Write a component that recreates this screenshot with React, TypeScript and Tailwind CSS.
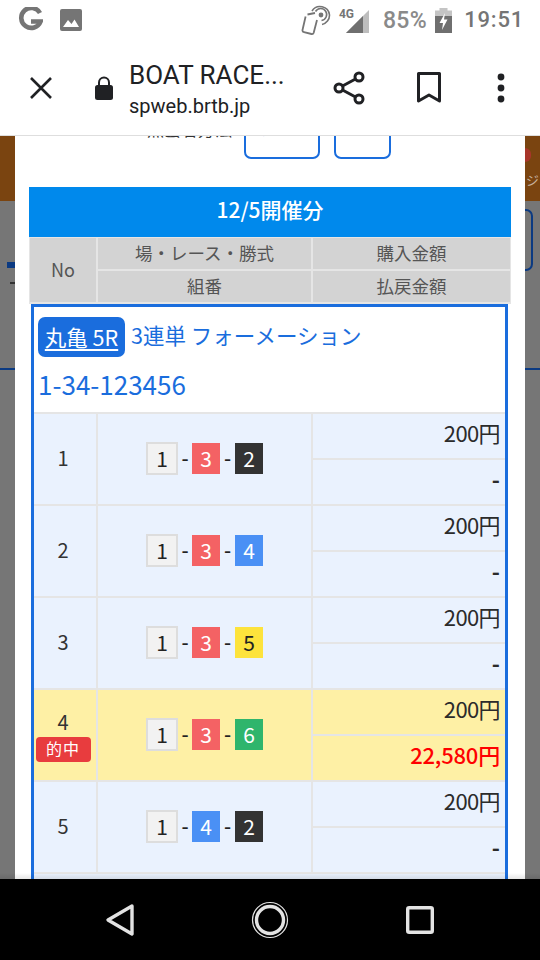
import React from "react";

const jp = "font-['Noto_Sans_CJK_JP','Noto_Sans',sans-serif]";

const boatColors: Record<number, string> = {
  1: "bg-[#f2f2f2] text-[#222] border-2 border-[#dddddd] w-[32px] h-[33px]",
  2: "bg-[#333333] text-white w-[28px] h-[31px]",
  3: "bg-[#f46264] text-white w-[28px] h-[31px]",
  4: "bg-[#4a90f5] text-white w-[28px] h-[31px]",
  5: "bg-[#fde33c] text-[#222] w-[28px] h-[31px]",
  6: "bg-[#2fb56c] text-white w-[28px] h-[31px]",
};

function Boat({ n }: { n: number }) {
  return (
    <span className={`flex items-center justify-center text-[21px] leading-none pb-[1px] ${boatColors[n]}`}>{n}</span>
  );
}

function Row({ no, combo, hit, payout }: { no: number; combo: number[]; hit?: boolean; payout?: string }) {
  const bg = hit ? "bg-[#fef0a5]" : "bg-[#eaf2fe]";
  return (
    <div className="grid grid-cols-[62px_213px_192px] gap-x-[2px] h-[92px] pb-[2px] bg-[#e5e5e5]">
      <div className={`${bg} flex flex-col items-center justify-center text-[20px] text-[#333] pr-[4px] ${hit ? "pt-[1px]" : "pb-[3px]"}`}>
        <span className="leading-[24px]">{no}</span>
        {hit && (
          <span className="mt-[3px] w-[55px] h-[25px] rounded-[4px] bg-[#e83c3e] text-white text-[16px] leading-[23px] text-center tracking-[1px]">
            的中
          </span>
        )}
      </div>
      <div className={`${bg} flex items-center justify-center pb-[1px]`}>
        <Boat n={combo[0]} />
        <span className="w-[14px] text-center text-[20px] font-medium leading-none text-[#222] pb-[2px]">-</span>
        <Boat n={combo[1]} />
        <span className="w-[15px] text-center text-[20px] font-medium leading-none text-[#222] pb-[2px]">-</span>
        <Boat n={combo[2]} />
      </div>
      <div className="flex flex-col">
        <div className={`${bg} h-[44px] flex items-center justify-end pr-[5px] pb-[7px] text-[22px] text-[#2b2b2b] tracking-[-0.6px]`}>200円</div>
        <div className="h-[2px] bg-[#e5e5e5]" />
        <div className={`${bg} flex-1 flex items-center justify-end pr-[5px] pb-[8px] text-[22px] ${payout ? "text-[#ff0000] font-medium tracking-[-0.2px]" : "text-[#2b2b2b] font-bold"}`}>
          {payout ?? "-"}
        </div>
      </div>
    </div>
  );
}

function StatusBar() {
  return (
    <div className="h-[40px] bg-white flex items-center pl-[18px] pr-[16px] shrink-0 text-[#757575]">
      <svg width="25" height="26" viewBox="0 0 25 26" fill="none">
        <path d="M22 6 A10 10 0 1 0 22.6 14.5 H13" stroke="#757575" strokeWidth="4.6" />
      </svg>
      <svg className="ml-[17px]" width="22" height="22" viewBox="0 0 22 22">
        <rect width="22" height="22" rx="2" fill="#757575" />
        <path d="M3 18 L8 11 L11.5 15 L14.5 10.5 L19 18 Z" fill="#fff" />
      </svg>
      <svg className="ml-auto" width="30" height="30" viewBox="0 0 30 30" fill="none" stroke="#757575">
        <path d="M6.5 9.5 L14 8 M4.6 11.5 L1.5 25 Q1.2 26.8 3 27.2 L10.5 29 Q12.2 29.3 12.7 27.7 L16 15" strokeWidth="1.8" />
        <path d="M11 6 A9.5 9.5 0 0 1 28.5 10 A9.5 9.5 0 0 1 21 19.5" strokeWidth="1.6" />
        <path d="M14.5 6.5 A6 6 0 1 1 20.5 15.5" strokeWidth="1.6" />
        <circle cx="20" cy="10" r="2.4" fill="#757575" stroke="none" />
      </svg>
      <div className="relative ml-[8px] w-[30px] h-[30px]">
        <svg className="absolute left-0 top-0" width="31" height="30" viewBox="0 0 31 30">
          <path d="M7 28 L30 5 V28 Z" fill="#bdbdbd" />
          <path d="M7 28 L24 11 V28 Z" fill="#6f6f6f" />
        </svg>
        <span className="absolute left-0 top-[2px] font-['Roboto',sans-serif] font-bold text-[12px] leading-[14px] text-[#757575]">4G</span>
      </div>
      <span className="ml-[14px] font-['Roboto',sans-serif] font-medium text-[23px] leading-none tracking-[0.4px] text-[#8a8a8a]">85%</span>
      <svg className="ml-[8px]" width="17" height="25" viewBox="0 0 17 25">
        <rect x="4.5" y="0" width="8" height="3" fill="#c4c4c4" />
        <rect x="0" y="2.5" width="17" height="6" fill="#c4c4c4" />
        <rect x="0" y="8" width="17" height="17" fill="#6f6f6f" />
        <path d="M10 5 L4.5 15 H8 L7 22 L12.5 11.5 H9 Z" fill="#fff" />
      </svg>
      <span className="ml-[12px] font-['Roboto',sans-serif] font-medium text-[22px] leading-none tracking-[0.8px] text-[#757575]">19:51</span>
    </div>
  );
}

function Toolbar() {
  return (
    <div className="h-[96px] bg-white border-b border-[#dedede] flex items-center shrink-0 font-['Roboto',sans-serif] text-[#202124]">
      <svg className="ml-[29px]" width="24" height="24" viewBox="0 0 24 24" fill="none">
        <path d="M2 2 L22 22 M22 2 L2 22" stroke="#202124" strokeWidth="2.6" />
      </svg>
      <svg className="ml-[42px]" width="18" height="24" viewBox="0 0 18 24">
        <path d="M4 10 V6.5 A5 5 0 0 1 14 6.5 V10" fill="none" stroke="#202124" strokeWidth="2" />
        <rect x="0" y="9" width="18" height="15" rx="2.5" fill="#202124" />
      </svg>
      <div className="ml-[16px] w-[190px] flex flex-col mt-[3px]">
        <span className="text-[26px] leading-[30px] whitespace-nowrap">BOAT RACE...</span>
        <span className="text-[20px] leading-[24px] mt-[4px] whitespace-nowrap">spweb.brtb.jp</span>
      </div>
      <svg className="ml-[14px]" width="32" height="36" viewBox="0 0 32 36" fill="none" stroke="#202124" strokeWidth="3">
        <circle cx="26" cy="7" r="4" />
        <circle cx="6" cy="18" r="4" />
        <circle cx="26" cy="29" r="4" />
        <path d="M9.5 16 L22.5 9 M9.5 20 L22.5 27" />
      </svg>
      <svg className="ml-[52px]" width="24" height="32" viewBox="0 0 24 32" fill="none">
        <path d="M1.5 1.5 H22.5 V29 L12 23 L1.5 29 Z" stroke="#202124" strokeWidth="3" strokeLinejoin="round" />
      </svg>
      <svg className="ml-[56px]" width="8" height="30" viewBox="0 0 8 30" fill="#202124">
        <circle cx="4" cy="4" r="3.4" />
        <circle cx="4" cy="15" r="3.4" />
        <circle cx="4" cy="26" r="3.4" />
      </svg>
    </div>
  );
}

function NavBar() {
  return (
    <div className="h-[81px] bg-black shrink-0 flex items-center">
      <svg className="ml-[105px]" width="30" height="34" viewBox="0 0 30 34" fill="none">
        <path d="M27 3 L3 17 L27 31 Z" stroke="#e3e3e3" strokeWidth="3.4" strokeLinejoin="round" />
      </svg>
      <svg className="ml-[116px]" width="38" height="38" viewBox="0 0 38 38" fill="none">
        <circle cx="19" cy="19" r="17.5" stroke="#e3e3e3" strokeWidth="1.2" />
        <circle cx="19" cy="19" r="13.5" stroke="#e3e3e3" strokeWidth="3.4" />
      </svg>
      <svg className="ml-[117px]" width="28" height="28" viewBox="0 0 28 28" fill="none">
        <rect x="1.7" y="1.7" width="24.6" height="24.6" rx="1.5" stroke="#e3e3e3" strokeWidth="3.4" />
      </svg>
    </div>
  );
}

export default function App() {
  return (
    <div className={`h-[960px] w-[540px] flex flex-col overflow-hidden bg-white ${jp}`}>
      <StatusBar />
      <Toolbar />
      <div className="relative flex-1 flex min-h-0 overflow-hidden">
        <div className="relative w-[15px] shrink-0 flex flex-col bg-[#767676] overflow-hidden">
          <div className="h-[65px] bg-[#7a4410]" />
          <div className="absolute left-[7px] top-[126px] w-[8px] h-[6px] bg-[#0b3a82]" />
          <div className="absolute left-[10px] top-[146px] w-[5px] h-[2px] bg-[#333]" />
          <div className="absolute left-0 top-[232px] w-full h-[2px] bg-[#0b3a82]" />
        </div>
        <div className="w-[510px] shrink-0 bg-white px-[14px] flex flex-col">
          <div className="h-[23px] flex items-end overflow-hidden shrink-0">
            <div className="ml-[118px] w-[86px] mb-[20px] text-[17px] leading-[20px] text-[#333] whitespace-nowrap">照会者方法</div>
            <div className="ml-[11px] w-[76px] h-[40px] rounded-b-[7px] border-2 border-[#1a6ddd] shrink-0 flex items-end justify-center pb-[19px] text-[17px] leading-[20px] text-[#1a6ddd]">すべて</div>
            <div className="ml-[14px] w-[57px] h-[40px] rounded-b-[7px] border-2 border-[#1a6ddd] shrink-0 flex items-end justify-center pb-[19px] text-[17px] leading-[20px] text-[#1a6ddd]">ト</div>
          </div>
          <div className="mt-[28px] h-[50px] pb-[5px] bg-[#0089ec] text-white text-[21px] font-medium flex items-center justify-center shrink-0">
            12/5開催分
          </div>
          <div className="grid grid-cols-[66px_213px_197px] grid-rows-[31px_31px] gap-[2px] bg-[#e5e5e5] p-[1px] text-[17.5px] text-[#555] shrink-0 h-[67px]">
            <div className="row-span-2 bg-[#d3d3d3] flex items-center justify-center text-[18px] pb-[2px]">No</div>
            <div className="bg-[#d3d3d3] flex items-center justify-center">場・レース・勝式</div>
            <div className="bg-[#d3d3d3] flex items-center justify-center">購入金額</div>
            <div className="bg-[#d3d3d3] flex items-center justify-center">組番</div>
            <div className="bg-[#d3d3d3] flex items-center justify-center">払戻金額</div>
          </div>
          <div className="ml-[2px] w-[477px] border-[3px] border-b-0 border-[#1a6ddd] bg-white flex-1">
            <div className="h-[107px] pl-[4px] pt-[10px] border-b-2 border-[#e5e5e5] text-[#1a6ddd]">
              <div className="flex items-center h-[40px]">
                <span className="h-[40px] w-[87px] rounded-[7px] bg-[#1a6ddd] text-white text-[21.5px] flex items-center justify-center underline underline-offset-[3px]">
                  丸亀 5R
                </span>
                <span className="ml-[6px] text-[21.5px] whitespace-nowrap pb-[3px]">3連単 フォーメーション</span>
              </div>
              <div className="mt-[7px] text-[26px] leading-[40px]">1-34-123456</div>
            </div>
            <Row no={1} combo={[1, 3, 2]} />
            <Row no={2} combo={[1, 3, 4]} />
            <Row no={3} combo={[1, 3, 5]} />
            <Row no={4} combo={[1, 3, 6]} hit payout="22,580円" />
            <Row no={5} combo={[1, 4, 2]} />
            <div className="h-[10px] bg-[#eaf2fe]" />
          </div>
        </div>
        <div className="relative w-[15px] shrink-0 flex flex-col bg-[#767676] overflow-hidden">
          <div className="relative h-[65px] bg-[#7a4410] overflow-hidden">
            <div className="absolute left-0 top-[12px] w-[6px] h-[14px] rounded-r-full bg-[#a8352a]" />
            <span className="absolute left-[1px] top-[36px] text-[13px] leading-[16px] text-white/60">ジ</span>
          </div>
          <div className="absolute left-[-4px] top-[73px] w-[12px] h-[62px] rounded-r-[7px] border-2 border-[#0b3a82]" />
          <div className="absolute left-0 top-[232px] w-full h-[2px] bg-[#0b3a82]" />
        </div>
        <div className="absolute left-0 right-0 bottom-0 h-[6px] bg-gradient-to-b from-transparent to-black/10" />
      </div>
      <NavBar />
    </div>
  );
}
